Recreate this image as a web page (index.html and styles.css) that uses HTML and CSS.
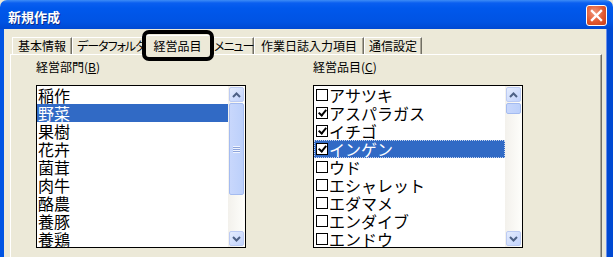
FILE: index.html
```html
<!DOCTYPE html>
<html lang="ja">
<head>
    <meta charset="UTF-8">
    <title>新規作成</title>
    <link rel="stylesheet" href="styles.css">
</head>
<body>
    <div class="window">
        <div class="titlebar">
            <span class="title">新規作成</span>
            <button class="close" type="button">
                <svg width="13" height="13" viewBox="0 0 13 13"><path d="M2 2 L11 11 M11 2 L2 11" stroke="#fff" stroke-width="2.4" stroke-linecap="square"/></svg>
            </button>
        </div>
        <div class="frame">
            <div class="tabs">
                <div class="tab tab-basic">基本情報</div>
                <div class="tab tab-folder">データフォルダ</div>
                <div class="tab tab-items active">経営品目<span class="mark"></span></div>
                <div class="tab tab-menu">メニュー</div>
                <div class="tab tab-diary">作業日誌入力項目</div>
                <div class="tab tab-comm">通信設定</div>
            </div>
            <div class="panel">
                <div class="field">
                    <label class="field-label">経営部門(<u>B</u>)</label>
                    <div class="listbox">
                        <ul class="items">
                            <li>稲作</li>
                            <li class="selected">野菜</li>
                            <li>果樹</li>
                            <li>花卉</li>
                            <li>菌茸</li>
                            <li>肉牛</li>
                            <li>酪農</li>
                            <li>養豚</li>
                            <li>養鶏</li>
                        </ul>
                        <div class="scrollbar">
                            <div class="sb-btn"><svg width="9" height="6" viewBox="0 0 9 6"><path d="M1 5 L4.5 1.5 L8 5" fill="none" stroke="#4d6185" stroke-width="2"/></svg></div>
                            <div class="sb-track">
                                <div class="sb-thumb thumb-large"><span class="grip"></span></div>
                            </div>
                            <div class="sb-btn"><svg width="9" height="6" viewBox="0 0 9 6"><path d="M1 1 L4.5 4.5 L8 1" fill="none" stroke="#4d6185" stroke-width="2"/></svg></div>
                        </div>
                    </div>
                </div>
                <div class="field">
                    <label class="field-label">経営品目(<u>C</u>)</label>
                    <div class="listbox">
                        <ul class="items checks">
                            <li><span class="box"></span>アサツキ</li>
                            <li><span class="box checked"></span>アスパラガス</li>
                            <li><span class="box checked"></span>イチゴ</li>
                            <li class="selected focus"><span class="box checked"></span>インゲン</li>
                            <li><span class="box"></span>ウド</li>
                            <li><span class="box"></span>エシャレット</li>
                            <li><span class="box"></span>エダマメ</li>
                            <li><span class="box"></span>エンダイブ</li>
                            <li><span class="box"></span>エンドウ</li>
                        </ul>
                        <div class="scrollbar">
                            <div class="sb-btn"><svg width="9" height="6" viewBox="0 0 9 6"><path d="M1 5 L4.5 1.5 L8 5" fill="none" stroke="#4d6185" stroke-width="2"/></svg></div>
                            <div class="sb-track">
                                <div class="sb-thumb thumb-small"></div>
                            </div>
                            <div class="sb-btn"><svg width="9" height="6" viewBox="0 0 9 6"><path d="M1 1 L4.5 4.5 L8 1" fill="none" stroke="#4d6185" stroke-width="2"/></svg></div>
                        </div>
                    </div>
                </div>
            </div>
        </div>
    </div>
</body>
</html>
```

FILE: styles.css
```css
body {
    margin: 0;
    width: 613px;
    height: 257px;
    overflow: hidden;
    font-family: "Noto Sans CJK JP", "Noto Sans", sans-serif;
    background: #ece9d8;
}
.window {
    width: 613px;
}
.titlebar {
    height: 29px;
    display: flex;
    align-items: flex-start;
    justify-content: space-between;
    border-radius: 7px 7px 0 0;
    background: linear-gradient(#3d8cf6 0, #0a5ff0 3px, #0058ec 8px, #0053e3 22px, #0049d2 29px);
}
.title {
    color: #fff;
    font-weight: bold;
    font-size: 13px;
    line-height: 16px;
    padding: 9px 0 0 8px;
    text-shadow: 1px 1px 0 #0a2c8c;
}
.close {
    width: 21px;
    height: 21px;
    margin: 5px 6px 0 0;
    padding: 0;
    border: 1px solid #fff;
    border-radius: 3px;
    background: radial-gradient(circle at 40% 35%, #f0997c, #e2582f 55%, #c73d18);
    display: flex;
    align-items: center;
    justify-content: center;
}
.frame {
    border-left: 4px solid #0054e3;
    border-right: 6px solid #0049d2;
    box-shadow: inset -1px 0 0 #6c8fe8;
    padding: 8px 5px 0 6px;
    height: 228px;
}
.tabs {
    display: flex;
    padding-left: 2px;
    height: 17px;
    font-size: 12px;
    font-feature-settings: "palt";
}
.tab {
    position: relative;
    flex: none;
    box-sizing: border-box;
    text-align: center;
    line-height: 16px;
    border-top: 1px solid #fff;
    border-left: 1px solid #fff;
    border-right: 1px solid #716f64;
    box-shadow: inset -1px 0 0 #aca899;
    color: #000;
    white-space: nowrap;
}
.tab-basic { width: 60px; }
.tab-folder { width: 72px; text-align: left; padding-left: 4px; letter-spacing: -1px; }
.tab-items { width: 67px; }
.tab-menu { width: 43px; text-align: left; padding-left: 2px; letter-spacing: -1px; }
.tab-diary { width: 110px; }
.tab-comm { width: 58px; }
.tab.active {
    z-index: 2;
    width: 71px;
    height: 20px;
    margin: -2px -2px 0 -2px;
    line-height: 19px;
    background: #ece9d8;
}
.mark {
    position: absolute;
    left: -1px;
    top: -6px;
    width: 64px;
    height: 23px;
    border: 4px solid #000;
    border-radius: 7px;
}
.panel {
    display: flex;
    gap: 67px;
    padding: 5px 0 0 25px;
    height: 200px;
    border-top: 1px solid #fff;
    border-left: 1px solid #fff;
    border-right: 1px solid #716f64;
    box-shadow: inset -1px 0 0 #aca899;
}
.field {
    width: 210px;
}
.field-label {
    display: block;
    font-size: 12px;
    line-height: 14px;
    margin-bottom: 11px;
}
.listbox {
    display: flex;
    height: 161px;
    border: 1px solid #000;
    background: #fff;
    overflow: hidden;
}
.items {
    flex: 1;
    margin: 0;
    padding: 0;
    list-style: none;
    font-size: 16px;
    line-height: 18px;
}
.items li {
    height: 18px;
    padding-left: 1px;
    white-space: nowrap;
}
.items li.selected {
    background: #316ac5;
    color: #fff;
}
.items li.focus {
    outline: 1px dotted #c8d4ec;
    outline-offset: -1px;
}
.checks li {
    display: flex;
    align-items: center;
}
.box {
    width: 10px;
    height: 10px;
    border: 1px solid #000;
    background: #fff;
    margin: 0 1px 0 1px;
    flex: none;
    position: relative;
}
.box.checked::after {
    content: "";
    position: absolute;
    left: 3px;
    top: 0;
    width: 3px;
    height: 6px;
    border-right: 2px solid #000;
    border-bottom: 2px solid #000;
    transform: rotate(40deg);
}
.scrollbar {
    width: 17px;
    display: flex;
    flex-direction: column;
    background: linear-gradient(90deg, #f3f1ec, #fefefb);
}
.sb-btn {
    margin: 1px;
    border: 1px solid #bccbf3;
    border-radius: 2px;
    background: linear-gradient(135deg, #e4ecfd, #c2d3fc);
    display: flex;
    align-items: center;
    justify-content: center;
    box-sizing: border-box;
    height: 15px;
    width: 15px;
}
.sb-track {
    flex: 1;
}
.sb-thumb {
    margin: 0 1px;
    border: 1px solid #a4bbf0;
    border-radius: 2px;
    background: linear-gradient(90deg, #c8d7fc, #bcd0fb);
    display: flex;
    align-items: center;
    justify-content: center;
}
.thumb-large {
    height: 90px;
}
.thumb-small {
    height: 9px;
}
.grip {
    width: 7px;
    height: 7px;
    background: repeating-linear-gradient(#f0f4fe 0, #f0f4fe 1px, #8da4db 1px, #8da4db 2px);
}
```
